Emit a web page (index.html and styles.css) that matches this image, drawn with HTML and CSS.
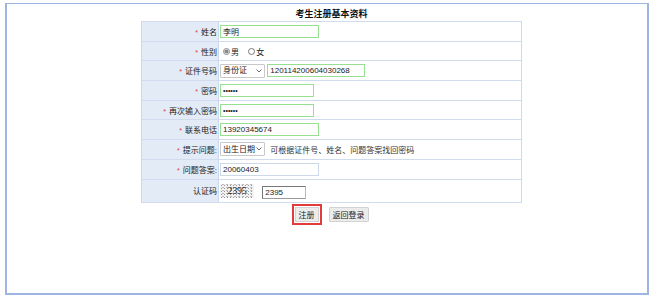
FILE: index.html
```html
<!DOCTYPE html>
<html>
  <head>
    <meta charset="utf-8">
    <title>考生注册基本资料</title>
    <link rel="stylesheet" href="styles.css">
  </head>
  <body>
    <div class="frame">
      <form class="reg">
        <h1>考生注册基本资料</h1>
        <table class="info">
          <tr>
            <th><span class="req">*</span>姓名</th>
            <td><input type="text" class="ok w99" value="李明"></td>
          </tr>
          <tr>
            <th><span class="req">*</span>性别</th>
            <td class="sex">
              <label><input type="radio" name="sex" checked>男</label>
              <label><input type="radio" name="sex">女</label>
            </td>
          </tr>
          <tr>
            <th><span class="req">*</span>证件号码</th>
            <td>
              <span class="sel">
                <select><option>身份证</option></select>
                <svg class="arrow" width="6" height="4" viewBox="0 0 6 4"><path d="M0.5 0.5 L3 3 L5.5 0.5" fill="none" stroke="#444" stroke-width="0.8"/></svg>
              </span>
              <input type="text" class="ok w98" value="120114200604030268">
            </td>
          </tr>
          <tr>
            <th><span class="req">*</span>密码</th>
            <td><input type="password" class="ok w94" value="123456"></td>
          </tr>
          <tr>
            <th><span class="req">*</span>再次输入密码</th>
            <td><input type="password" class="ok w94" value="123456"></td>
          </tr>
          <tr>
            <th><span class="req">*</span>联系电话</th>
            <td><input type="text" class="ok w99" value="13920345674"></td>
          </tr>
          <tr>
            <th><span class="req">*</span>提示问题:</th>
            <td>
              <span class="sel">
                <select><option>出生日期</option></select>
                <svg class="arrow" width="6" height="4" viewBox="0 0 6 4"><path d="M0.5 0.5 L3 3 L5.5 0.5" fill="none" stroke="#444" stroke-width="0.8"/></svg>
              </span>
              <span class="hint">可根据证件号、姓名、问题答案找回密码</span>
            </td>
          </tr>
          <tr>
            <th><span class="req">*</span>问题答案:</th>
            <td><input type="text" class="plain w99" value="20060403"></td>
          </tr>
          <tr class="code-row">
            <th>认证码</th>
            <td>
              <span class="captcha">2395</span>
              <input type="text" class="code" value="2395">
            </td>
          </tr>
        </table>
        <div class="actions">
          <button type="button" class="btn focus">注册</button>
          <button type="button" class="btn">返回登录</button>
        </div>
      </form>
    </div>
  </body>
</html>
```

FILE: styles.css
```css
body, html {
    margin: 0;
    padding: 0;
    background: #fff;
    font-family: "Liberation Sans", "Noto Sans CJK SC", sans-serif;
    font-size: 8px;
    color: #222;
}

.frame {
    margin: 3px 4px 0 5px;
    height: 289px;
    border: 2px solid #9db5e3;
    border-top-width: 1px;
}

.reg {
    padding-left: 9px;
}

h1 {
    margin: 0;
    height: 17px;
    line-height: 21px;
    font-size: 9px;
    font-weight: bold;
    text-align: center;
    color: #111;
}

.info {
    margin: 0 auto;
    width: 381px;
    border-collapse: collapse;
    border: 1px solid #cbd9ee;
}

.info th, .info td {
    height: 18.7px;
    padding: 0;
    border: 1px solid #d0dcee;
    border-left: none;
    border-right: none;
}

.info th {
    width: 75px;
    padding-right: 1px;
    background: #e3ebf6;
    border-right: 1px solid #cbd9ee;
    text-align: right;
    font-weight: normal;
    color: #222;
}

.info td {
    padding-left: 1px;
    border-right: 1px solid #cbd9ee;
}

.req {
    color: #e0363a;
    margin-right: 3px;
    font-size: 7px;
}

input[type=text], input[type=password] {
    box-sizing: border-box;
    height: 13px;
    margin: 0;
    padding: 0 2px;
    font-family: "Liberation Sans", "Noto Sans CJK SC", sans-serif;
    font-size: 8px;
    color: #222;
    vertical-align: middle;
    outline: none;
}

input[type=password] {
    font-size: 7px;
    letter-spacing: 0;
}

.ok {
    border: 1px solid #97e092;
}

.plain {
    border: 1px solid #cdd8e8;
}

.w99 { width: 99px; }
.w98 { width: 98px; }
.w94 { width: 94px; }

.sex label {
    display: inline-flex;
    align-items: center;
    margin-right: 4px;
}

.sex input {
    width: 7px;
    height: 7px;
    margin: 0 1px 0 3px;
    accent-color: #8a8a8a;
}

.sel {
    position: relative;
    display: inline-block;
    vertical-align: middle;
}

.sel select {
    box-sizing: border-box;
    display: block;
    width: 45px;
    height: 14px;
    margin: 0;
    padding: 0 5px 0 2px;
    appearance: none;
    font-family: "Liberation Sans", "Noto Sans CJK SC", sans-serif;
    font-size: 8px;
    color: #222;
    border: 1px solid #c9c9c9;
    border-radius: 1px;
    background: #fff;
}

.sel .arrow {
    position: absolute;
    right: 3px;
    top: 5px;
    background: #fff;
}

.hint {
    margin-left: 3px;
    color: #333;
    vertical-align: middle;
}

.code-row th, .code-row td {
    height: 22px;
}

.captcha {
    display: inline-block;
    width: 34px;
    height: 14px;
    line-height: 14px;
    vertical-align: middle;
    text-align: center;
    font-family: "Liberation Serif", serif;
    font-size: 10px;
    color: #222;
    letter-spacing: -0.3px;
    background:
        radial-gradient(circle, #999 0.6px, transparent 0.8px) 0 0 / 3px 3px,
        radial-gradient(circle, #bbb 0.6px, transparent 0.8px) 1px 2px / 4px 3px,
        #f2f2f2;
}

.code {
    width: 44px;
    margin-left: 6px !important;
    margin-top: 4px !important;
    border: 1px solid #777;
    border-right-color: #bbb;
    border-bottom-color: #999;
}

.actions {
    display: flex;
    justify-content: center;
    align-items: center;
    gap: 10px;
    margin-top: 4px;
}

.btn {
    box-sizing: border-box;
    height: 15px;
    padding: 0 3px;
    font-family: "Liberation Sans", "Noto Sans CJK SC", sans-serif;
    font-size: 8px;
    color: #222;
    background: #ececec;
    border: 1px solid #d2d2d2;
    border-radius: 1px;
}

.btn.focus {
    border-radius: 0;
    outline: 2px solid #e33b3b;
    outline-offset: 1px;
}
```
